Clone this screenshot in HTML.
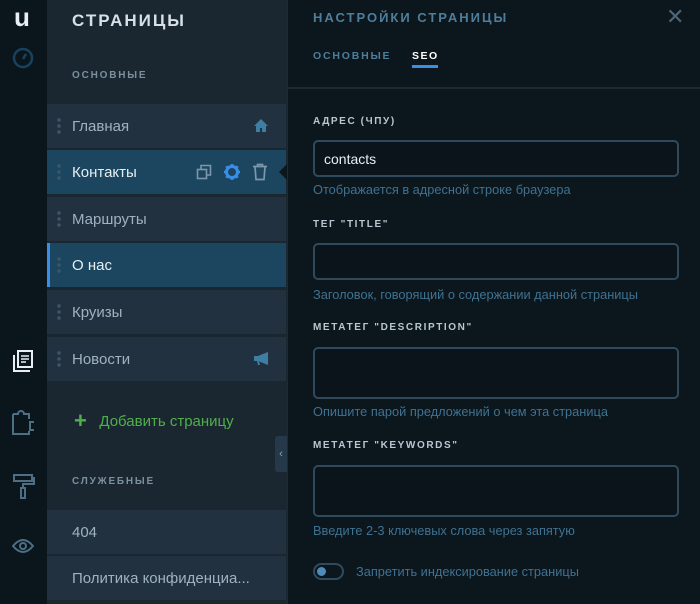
<!DOCTYPE html>
<html><head><meta charset="utf-8"><style>
*{margin:0;padding:0;box-sizing:border-box}
body{width:700px;height:604px;overflow:hidden;background:#0c161d;font-family:"Liberation Sans",sans-serif;position:relative}
.rail{position:absolute;left:0;top:0;width:47px;height:604px;background:#0b151c}
.side{position:absolute;left:47px;top:0;width:240px;height:604px;background:#1b2730}
.panel{position:absolute;left:287px;top:0;width:413px;height:604px;background:#0c161d;border-left:1px solid #1e2b34}
.item{position:absolute;left:0;width:239px;height:44px;background:#223140;color:#9fb2c0;font-size:15px;line-height:46px;padding-left:25px}
.item.act{background:#1c4660;color:#e6eef3}
.dots{position:absolute;left:10px;top:13px;width:4px;height:18px;background:radial-gradient(circle,#3e5566 1.6px,transparent 2px) 0 0/4px 6px}
.sec{position:absolute;left:25px;font-size:10px;font-weight:bold;letter-spacing:1.8px;color:#7a909e}
.lbl{position:absolute;left:25px;font-size:10px;font-weight:bold;letter-spacing:1.6px;color:#b8c7d1}
.inp{position:absolute;left:25px;width:366px;border:2px solid #2f4a5d;border-radius:5px;background:#0b141b}
.help{position:absolute;left:25px;font-size:12.8px;color:#3f7291}
</style></head><body>
<div class="rail">
<div style="position:absolute;left:14px;top:2px;color:#e8eef2;font-size:26px;font-weight:bold">u</div>
<svg style="position:absolute;left:12px;top:47px" width="22" height="22" viewBox="0 0 22 22"><circle cx="11" cy="11" r="9" fill="none" stroke="#17435e" stroke-width="2.5"/><path d="M11 12l3-5" stroke="#17435e" stroke-width="2.5"/></svg>
<svg style="position:absolute;left:11px;top:348px" width="24" height="26" viewBox="0 0 24 26"><path d="M3 7v16h16" fill="none" stroke="#e8eef2" stroke-width="2"/><rect x="7" y="3" width="14" height="16" fill="none" stroke="#e8eef2" stroke-width="2"/><path d="M10 8h8M10 11h8M10 14h5" stroke="#e8eef2" stroke-width="1.6"/></svg>
<svg style="position:absolute;left:10px;top:405px" width="26" height="32" viewBox="0 0 26 32"><path d="M3 9h5a3 3 0 1 1 6 0h5v5M19 26v3H3V9" fill="none" stroke="#4d6f86" stroke-width="2"/><path d="M24 17h-4v8h4" fill="none" stroke="#4d6f86" stroke-width="2"/></svg>
<svg style="position:absolute;left:12px;top:472px" width="24" height="30" viewBox="0 0 24 30"><path d="M2 3h18v6H2zM20 6h2v6H11v4" fill="none" stroke="#4d6f86" stroke-width="2"/><rect x="9" y="16" width="4" height="10" fill="none" stroke="#4d6f86" stroke-width="2"/></svg>
<svg style="position:absolute;left:12px;top:538px" width="22" height="16" viewBox="0 0 22 16"><path d="M1 8q10-12 20 0q-10 12-20 0z" fill="none" stroke="#4d6f86" stroke-width="2"/><circle cx="11" cy="8" r="3" fill="none" stroke="#4d6f86" stroke-width="2"/></svg>
<div style="position:absolute;left:39px;top:355px;width:0;height:0;border:8px solid transparent;border-right-color:#1b2730"></div>
</div>
<div class="side">
<div style="position:absolute;left:25px;top:11px;color:#d7e0e6;font-size:17px;font-weight:bold;letter-spacing:2px">СТРАНИЦЫ</div>
<div class="sec" style="top:70px">ОСНОВНЫЕ</div>
<div class="item" style="top:104px"><span class="dots"></span>Главная<svg style="position:absolute;left:206px;top:14px" width="16" height="15" viewBox="0 0 16 15"><path d="M8 1L1 8h2v6h4v-4h2v4h4V8h2z" fill="#3e7ea3"/></svg></div>
<div class="item act" style="top:150px"><span class="dots"></span>Контакты
<svg style="position:absolute;left:149px;top:14px" width="16" height="16" viewBox="0 0 16 16"><rect x="1.5" y="5.5" width="9" height="9" fill="none" stroke="#7c97a9" stroke-width="1.6"/><path d="M5 5V1.5h9.5V11H11" fill="none" stroke="#7c97a9" stroke-width="1.6"/></svg>
<svg style="position:absolute;left:176px;top:13px" width="18" height="18" viewBox="0 0 18 18"><circle cx="9" cy="9" r="5.5" fill="none" stroke="#3b8ee6" stroke-width="3"/><path d="M9 1v3M9 14v3M1 9h3M14 9h3M3.3 3.3l2.2 2.2M12.5 12.5l2.2 2.2M3.3 14.7l2.2-2.2M12.5 5.5l2.2-2.2" stroke="#3b8ee6" stroke-width="2.6"/></svg>
<svg style="position:absolute;left:205px;top:13px" width="16" height="18" viewBox="0 0 16 18"><path d="M1 3.5h14M5.5 3.5V1.5h5v2M3 3.5l1 13h8l1-13" fill="none" stroke="#7c97a9" stroke-width="1.7"/></svg>
<div style="position:absolute;right:-1px;top:14px;border:8px solid transparent;border-right-color:#0c161d"></div></div>
<div class="item" style="top:197px"><span class="dots"></span>Маршруты</div>
<div class="item act" style="top:243px;border-left:3px solid #3b8ee6;padding-left:22px"><span class="dots" style="left:7px"></span>О нас</div>
<div class="item" style="top:290px"><span class="dots"></span>Круизы</div>
<div class="item" style="top:337px"><span class="dots"></span>Новости<svg style="position:absolute;left:206px;top:14px" width="18" height="15" viewBox="0 0 18 15"><path d="M1 5h4l10-4v13L5 10H1z M4 10l1 4h2l-1-4" fill="#3e7ea3"/></svg></div>
<div style="position:absolute;left:27px;top:406px;color:#4fb04b;font-size:15px"><span style="font-size:22px;font-weight:bold;position:relative;top:2px">+</span>&nbsp;&nbsp;&nbsp;Добавить страницу</div>
<div style="position:absolute;left:228px;top:436px;width:12px;height:36px;background:#25394a;border-radius:3px 0 0 3px;color:#8aa;font-size:11px;line-height:36px;text-align:center">‹</div>
<div class="sec" style="top:476px">СЛУЖЕБНЫЕ</div>
<div class="item" style="top:510px">404</div>
<div class="item" style="top:556px">Политика конфиденциа...</div>
</div>
<div class="panel">
<div style="position:absolute;left:25px;top:10px;color:#4d7e9c;font-size:13px;font-weight:bold;letter-spacing:2px">НАСТРОЙКИ СТРАНИЦЫ</div>
<div style="position:absolute;left:378px;top:4px;color:#4e6676;font-size:22px">✕</div>
<div style="position:absolute;left:25px;top:50px;color:#4d7e9c;font-size:10.5px;font-weight:bold;letter-spacing:1.8px">ОСНОВНЫЕ</div>
<div style="position:absolute;left:124px;top:50px;color:#fff;font-size:10.5px;font-weight:bold;letter-spacing:1.5px">SEO</div>
<div style="position:absolute;left:124px;top:65px;width:26px;height:3px;background:#3b8ee6"></div>
<div style="position:absolute;left:0;top:87px;width:413px;height:2px;background:#1d2a33"></div>
<div class="lbl" style="top:116px">АДРЕС (ЧПУ)</div>
<div class="inp" style="top:140px;height:37px;color:#e6eef3;font-size:14px;line-height:35px;padding-left:9px">contacts</div>
<div class="help" style="top:182px">Отображается в адресной строке браузера</div>
<div class="lbl" style="top:219px">ТЕГ "TITLE"</div>
<div class="inp" style="top:243px;height:37px"></div>
<div class="help" style="top:287px">Заголовок, говорящий о содержании данной страницы</div>
<div class="lbl" style="top:322px">МЕТАТЕГ "DESCRIPTION"</div>
<div class="inp" style="top:347px;height:52px"></div>
<div class="help" style="top:404px">Опишите парой предложений о чем эта страница</div>
<div class="lbl" style="top:440px">МЕТАТЕГ "KEYWORDS"</div>
<div class="inp" style="top:465px;height:52px"></div>
<div class="help" style="top:523px">Введите 2-3 ключевых слова через запятую</div>
<div style="position:absolute;left:25px;top:563px;width:31px;height:17px;border:2px solid #2f4a5d;border-radius:9px"><div style="position:absolute;left:2px;top:2px;width:9px;height:9px;border-radius:50%;background:#4d8cb8"></div></div>
<div class="help" style="left:68px;top:564px">Запретить индексирование страницы</div>
</div>
</body></html>
